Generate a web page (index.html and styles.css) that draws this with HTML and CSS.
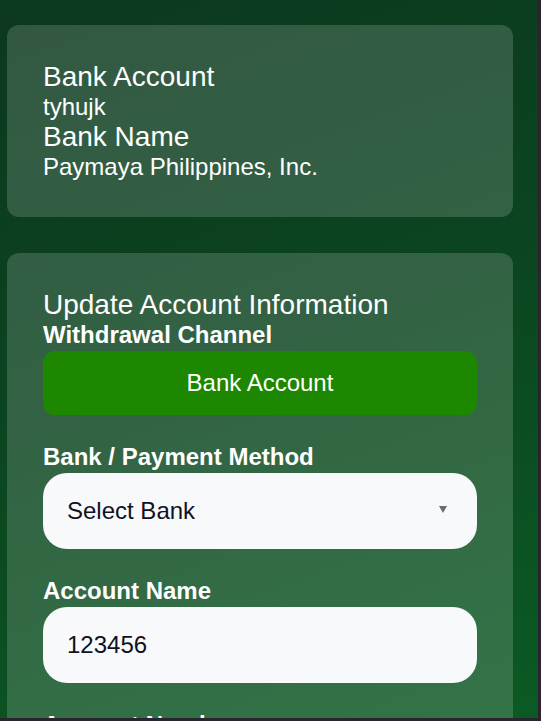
FILE: index.html
```html
<!DOCTYPE html>
<html lang="en">
<head>
<meta charset="utf-8">
<title>Account</title>
<link rel="stylesheet" href="styles.css">
</head>
<body>
<div class="screen">
  <div class="content">
    <section class="card">
      <h3 class="info-title">Bank Account</h3>
      <p class="info-value">tyhujk</p>
      <h3 class="info-title">Bank Name</h3>
      <p class="info-value">Paymaya Philippines, Inc.</p>
    </section>
    <section class="card">
      <h3 class="info-title">Update Account Information</h3>
      <label class="field-label">Withdrawal Channel</label>
      <div class="channel-btn">Bank Account</div>
      <div class="field">
        <label class="field-label">Bank / Payment Method</label>
        <div class="control select">
          <span>Select Bank</span>
          <span class="arrow"></span>
        </div>
      </div>
      <div class="field">
        <label class="field-label">Account Name</label>
        <div class="control">123456</div>
      </div>
      <div class="field">
        <label class="field-label">Account Number</label>
        <div class="control"></div>
      </div>
    </section>
  </div>
</div>
</body>
</html>
```
FILE: styles.css
```css
html, body {
  margin: 0;
  padding: 0;
}
body {
  background: #2a2430;
  width: 541px;
  height: 721px;
  overflow: hidden;
  font-family: "Liberation Sans", Arial, sans-serif;
}
.screen {
  width: 538px;
  height: 718px;
  overflow: hidden;
  background: linear-gradient(160deg, #0c381e 0%, #0b4420 45%, #0b5a24 100%);
}
.content {
  display: flex;
  flex-direction: column;
  gap: 36px;
  padding: 25px 0 0 7px;
}
.card {
  width: 506px;
  box-sizing: border-box;
  padding: 36px;
  border-radius: 12px;
  background: rgba(255, 255, 255, 0.16);
  display: flex;
  flex-direction: column;
  color: #ffffff;
}
.info-title {
  margin: 0;
  font-size: 28px;
  font-weight: normal;
  line-height: 32px;
}
.info-value {
  margin: 0;
  font-size: 24px;
  line-height: 28px;
}
.field-label {
  display: block;
  font-size: 24px;
  font-weight: bold;
  line-height: 28px;
}
.channel-btn {
  margin-top: 2px;
  height: 64px;
  border-radius: 12px;
  background: #1e8700;
  color: #ffffff;
  font-size: 24px;
  display: flex;
  align-items: center;
  justify-content: center;
}
.field {
  margin-top: 28px;
  display: flex;
  flex-direction: column;
}
.field .field-label {
  margin-bottom: 2px;
}
.control {
  height: 76px;
  box-sizing: border-box;
  border-radius: 24px;
  background: #f7f9fb;
  color: #111122;
  font-size: 24px;
  padding: 0 24px;
  display: flex;
  align-items: center;
}
.select {
  justify-content: space-between;
  padding-right: 30px;
}
.arrow {
  width: 0;
  height: 0;
  border-left: 4px solid transparent;
  border-right: 4px solid transparent;
  border-top: 7px solid #6b6b78;
  margin-top: -4px;
}
```
